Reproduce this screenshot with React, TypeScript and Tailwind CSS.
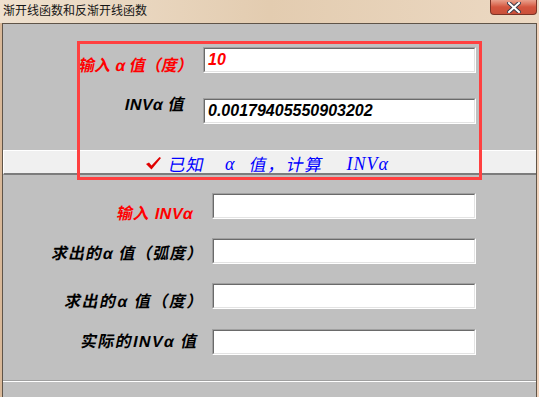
import React from "react";

const labelFont = { fontFamily: '"Liberation Sans", "Noto Sans CJK SC", sans-serif' };

function Field({ value, color, width }: { value?: string; color?: string; width: string }) {
  return (
    <div className={`${width} h-[26px] border-t border-l border-t-[#a0a0a0] border-l-[#a0a0a0] border-b border-r border-b-white border-r-white shrink-0`}>
      <div className="h-full bg-white border-t border-l border-t-[#6a6a6a] border-l-[#6a6a6a] border-b border-r border-b-[#e3e3e3] border-r-[#e3e3e3] flex items-center pl-[3px]">
        {value && (
          <span className={`font-['Liberation_Sans'] font-bold italic text-[16px] leading-4 ${color}`}>{value}</span>
        )}
      </div>
    </div>
  );
}

export default function App() {
  return (
    <div className="w-[539px] h-[397px] flex flex-col overflow-hidden bg-gradient-to-r from-[#d9b898] via-[#e8d2bb] to-[#f0d2ba]">
      {/* title bar */}
      <div className="h-[23px] shrink-0 flex items-start justify-between bg-gradient-to-r from-[#efe1cf] via-[#e3ccb0] to-[#ecd9c3]">
        <span className="pl-[3px] pt-[2px] text-[12px] leading-[15px] text-[#151515] font-['Noto_Sans_CJK_SC',sans-serif]">
          渐开线函数和反渐开线函数
        </span>
        <div className="mr-[2px] w-[47px] h-[15px] rounded-b-[4px] border border-t-0 border-[#7a3326] bg-gradient-to-b from-[#e9a08c] via-[#d4553e] to-[#c9503a] flex items-center justify-center">
          <svg width="14" height="11" viewBox="0 0 14 11">
            <path d="M2 1 L12 10 M12 1 L2 10" stroke="#3b3b4a" strokeWidth="4" strokeLinecap="square" />
            <path d="M2 1 L12 10 M12 1 L2 10" stroke="#ffffff" strokeWidth="2" strokeLinecap="square" />
          </svg>
        </div>
      </div>
      {/* body */}
      <div className="flex-1 flex pl-[2px] pr-[2px]">
        <div className="flex-1 relative bg-[#c0c0c0] border-l border-t border-r border-[#5f5448] flex flex-col" style={labelFont}>
          {/* row 1 */}
          <div className="mt-[23px] h-[26px] flex items-start">
            <div className="w-[200px] shrink-0 text-right pr-[9px] mt-[11px] text-[16px] leading-4 font-bold text-[#ff0000] whitespace-nowrap">
              <span className="inline-block -skew-x-12">输入 α 值（度）</span>
            </div>
            <Field value="10" color="text-[#ff0000]" width="w-[273px]" />
          </div>
          {/* row 2 */}
          <div className="mt-[25px] h-[26px] flex items-start">
            <div className="w-[200px] shrink-0 text-right pr-[18px] -mt-px text-[16px] leading-4 font-bold text-black whitespace-nowrap tracking-[0.5px]">
              <span className="inline-block -skew-x-12">INVα 值</span>
            </div>
            <Field value="0.00179405550903202" color="text-black" width="w-[273px]" />
          </div>
          {/* bar */}
          <div className="mt-[26px] h-[25px] bg-[#f0f0f0] border-t border-l border-white border-b-2 border-b-[#7c7c7c] flex items-center pt-[3px] pl-[142px]">
            <svg width="15" height="13" viewBox="0 0 15 13" className="shrink-0">
              <path d="M0 7 L3 5.5 L5.5 8.5 L13.5 0 L15 1 L5.5 12.5 Z" fill="#e00000" />
            </svg>
            <span className="ml-[8px] inline-block -skew-x-12 text-[17px] leading-4 text-[#0000ff] tracking-[1px] font-['Noto_Sans_CJK_SC',sans-serif]">已知</span>
            <span className="ml-[20px] text-[18px] leading-4 italic text-[#0000ff] font-['Liberation_Serif',serif]">α</span>
            <span className="ml-[16px] inline-block -skew-x-12 text-[17px] leading-4 text-[#0000ff] tracking-[1.5px] font-['Noto_Sans_CJK_SC',sans-serif]">值，计算</span>
            <span className="ml-[22px] text-[18px] leading-4 italic text-[#0000ff] tracking-[1px] font-['Liberation_Serif',serif]">INVα</span>
          </div>
          {/* lower rows */}
          <div className="mt-[18px] h-[26px] flex items-start">
            <div className="w-[209px] shrink-0 text-right pr-[19px] mt-[13px] text-[16px] leading-4 font-bold text-[#ff0000] whitespace-nowrap tracking-[0.5px]">
              <span className="inline-block -skew-x-12">输入 INVα</span>
            </div>
            <Field width="w-[264px]" />
          </div>
          <div className="mt-[19px] h-[26px] flex items-start">
            <div className="w-[209px] shrink-0 text-right pr-[8px] mt-[8px] text-[16px] leading-4 font-bold text-black whitespace-nowrap tracking-[1px]">
              <span className="inline-block -skew-x-12">求出的α 值（弧度）</span>
            </div>
            <Field width="w-[264px]" />
          </div>
          <div className="mt-[19px] h-[26px] flex items-start">
            <div className="w-[209px] shrink-0 text-right pr-[7px] mt-[11px] text-[16px] leading-4 font-bold text-black whitespace-nowrap tracking-[1.5px]">
              <span className="inline-block -skew-x-12">求出的α 值（度）</span>
            </div>
            <Field width="w-[264px]" />
          </div>
          <div className="mt-[20px] h-[26px] flex items-start">
            <div className="w-[209px] shrink-0 text-right pr-[13px] mt-[5px] text-[16px] leading-4 font-bold text-black whitespace-nowrap tracking-[1.4px]">
              <span className="inline-block -skew-x-12">实际的INVα 值</span>
            </div>
            <Field width="w-[264px]" />
          </div>
          {/* separator */}
          <div className="mt-[25px] h-[2px] border-t border-[#a0a0a0] border-b border-b-white" />
          {/* red annotation rectangle */}
          <div className="absolute left-[74px] top-[17px] w-[405px] h-[139px] border-[3px] border-[#ff4040] pointer-events-none" />
        </div>
      </div>
    </div>
  );
}
